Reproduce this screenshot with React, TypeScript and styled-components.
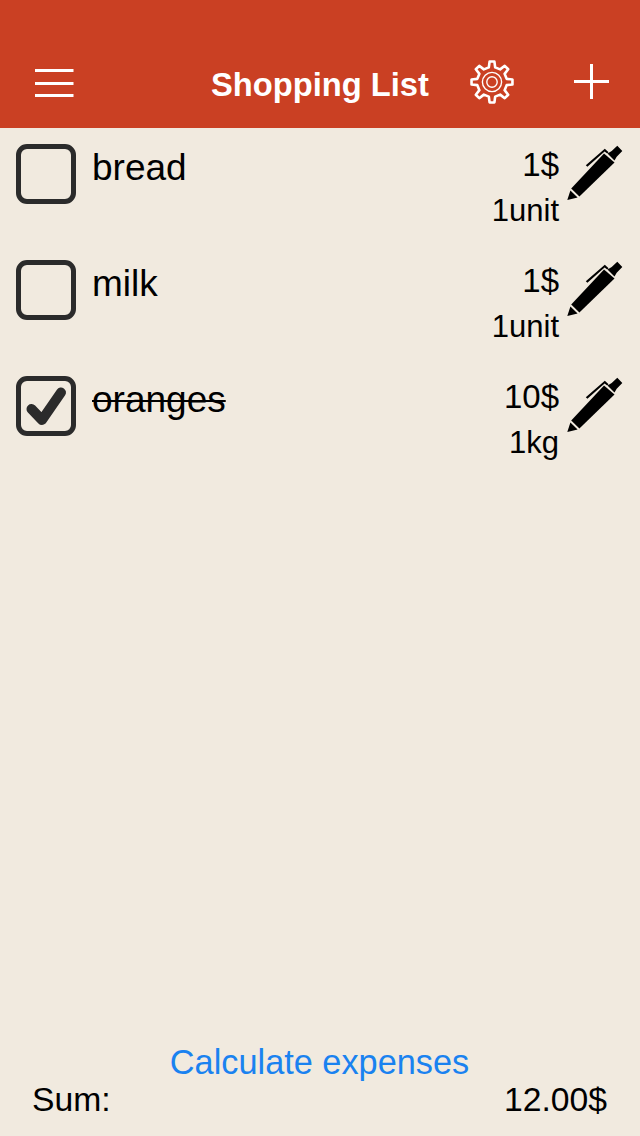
import React from 'react';
import styled, { createGlobalStyle } from 'styled-components';

const GlobalStyle = createGlobalStyle`
html, body {
  margin: 0;
  padding: 0;
  background: #f1eadf;
}
`;

interface Item {
    name: string;
    price: string;
    amount: string;
    done?: boolean;
}

const items: Item[] = [
    { name: 'bread', price: '1$', amount: '1unit' },
    { name: 'milk', price: '1$', amount: '1unit' },
    { name: 'oranges', price: '10$', amount: '1kg', done: true }
];

// 8 teeth, outline built once from polar points
const gearPath = () => {
    const pts: string[] = [];
    const teeth = 8;
    for (let i = 0; i < teeth; i++) {
        const a = (i / teeth) * Math.PI * 2 - Math.PI / 2;
        const step = (Math.PI * 2) / teeth;
        const corners: [number, number][] = [
            [15, a - step * 0.27],
            [20.6, a - step * 0.15],
            [20.6, a + step * 0.15],
            [15, a + step * 0.27]
        ];
        corners.forEach(([r, t]) => {
            pts.push(`${(22 + r * Math.cos(t)).toFixed(2)} ${(22 + r * Math.sin(t)).toFixed(2)}`);
        });
    }
    return 'M' + pts.join('L') + 'Z';
};

const MenuIcon = () => (
    <MenuSvg viewBox="0 0 40 30">
        <rect x="1" y="0" width="38.5" height="3" fill="#fff" />
        <rect x="1" y="13" width="38.5" height="3" fill="#fff" />
        <rect x="1" y="25" width="38.5" height="3" fill="#fff" />
    </MenuSvg>
);

const GearIcon = () => (
    <GearSvg viewBox="0 0 44 44" fill="none" stroke="#fff">
        <path d={gearPath()} strokeWidth="2.6" strokeLinejoin="round" />
        <circle cx="22" cy="22" r="9.6" strokeWidth="1.4" />
        <circle cx="22" cy="22" r="5.2" strokeWidth="1.4" />
    </GearSvg>
);

const PlusIcon = () => (
    <PlusSvg viewBox="0 0 35 35">
        <rect x="0" y="16" width="35" height="3" fill="#fff" />
        <rect x="16" y="0" width="3" height="35" fill="#fff" />
    </PlusSvg>
);

const PenIcon = () => (
    <PenSvg viewBox="6 5 58 57">
        <path d="M7.3 60L10.4 50.6L17.6 57.6Z" />
        <path d="M11.2 48.6L44 13.5L54.5 22.5L19.4 56.4Z" />
        <path d="M47.5 13.5L51.7 11L57.3 5.7L62.3 11L56.7 16.7L54.5 20.5Z" />
        <path d="M25.8 25.2L44.8 8.8L48.6 12.2L47.2 13.6L44.6 11.4L27.4 26.8Z" />
    </PenSvg>
);

const CheckMark = () => (
    <CheckSvg viewBox="0 0 60 60">
        <path d="M15.5 33L26 44L45 16.5" fill="none" stroke="#2b2b2b" strokeWidth="10" strokeLinecap="round" strokeLinejoin="round" />
    </CheckSvg>
);

export default function App() {
    return (
        <Page>
            <GlobalStyle />
            <Header>
                <HeaderLeft><MenuIcon /></HeaderLeft>
                <Title>Shopping List</Title>
                <HeaderRight>
                    <GearIcon />
                    <PlusIcon />
                </HeaderRight>
            </Header>
            <List>
                {items.map(item => (
                    <Row key={item.name}>
                        <CheckBox>{item.done && <CheckMark />}</CheckBox>
                        <Name done={item.done}>{item.name}</Name>
                        <Values>
                            <Price>{item.price}</Price>
                            <Amount>{item.amount}</Amount>
                        </Values>
                        <PenIcon />
                    </Row>
                ))}
            </List>
            <Footer>
                <CalcButton>Calculate expenses</CalcButton>
                <SumRow>
                    <span>Sum:</span>
                    <span>12.00$</span>
                </SumRow>
            </Footer>
        </Page>
    );
}

const Page = styled.div`
display: flex;
flex-direction: column;
height: 1136px;
overflow: hidden;
background: #f1eadf;
font-family: "Liberation Sans", Arial, sans-serif;
color: #000;
`;

const Header = styled.header`
display: grid;
grid-template-columns: 1fr auto 1fr;
align-items: center;
height: 128px;
padding-top: 40px;
box-sizing: border-box;
background: #ca4023;
color: #fff;
`;

const HeaderLeft = styled.div`
display: flex;
padding-left: 34px;
`;

const HeaderRight = styled.div`
display: flex;
align-items: center;
padding: 0 0 5px 41px;
`;

const Title = styled.h1`
margin: 1px 0 0;
font-size: 32.7px;
font-weight: 700;
line-height: 40px;
`;

const MenuSvg = styled.svg`
display: block;
width: 40px;
height: 30px;
`;

const GearSvg = styled.svg`
display: block;
width: 44px;
height: 44px;
`;

const PlusSvg = styled.svg`
display: block;
width: 35px;
height: 35px;
margin-left: 60px;
`;

const List = styled.main`
flex: 1;
display: flex;
flex-direction: column;
`;

const Row = styled.div`
display: flex;
align-items: flex-start;
height: 116px;
padding: 16px 16px 0 16px;
box-sizing: border-box;
`;

const CheckBox = styled.div`
position: relative;
flex: none;
width: 60px;
height: 60px;
box-sizing: border-box;
border: 5px solid #2b2b2b;
border-radius: 11px;
`;

const CheckSvg = styled.svg`
position: absolute;
left: -5px;
top: -5px;
width: 60px;
height: 60px;
`;

const Name = styled.div<{ done?: boolean }>`
flex: 1;
margin-left: 16px;
font-size: 37px;
line-height: 46px;
padding-top: 1px;
text-decoration: ${props => (props.done ? 'line-through' : 'none')};
text-decoration-thickness: 2px;
`;

const Values = styled.div`
display: flex;
flex-direction: column;
align-items: flex-end;
padding-top: 1px;
`;

const Price = styled.div`
font-size: 33px;
line-height: 40px;
`;

const Amount = styled.div`
margin-top: 6px;
font-size: 31px;
line-height: 40px;
`;

const PenSvg = styled.svg`
display: block;
flex: none;
width: 58px;
height: 57px;
margin: 1px 0 0 7px;
`;

const Footer = styled.footer`
display: flex;
flex-direction: column;
padding: 0 33px 17px 32px;
`;

const CalcButton = styled.button`
align-self: center;
padding: 0;
border: none;
background: none;
color: #1a82f0;
font-family: inherit;
font-size: 34.3px;
line-height: 40px;
`;

const SumRow = styled.div`
display: flex;
justify-content: space-between;
margin-top: -3px;
font-size: 33.7px;
line-height: 40px;
`;
